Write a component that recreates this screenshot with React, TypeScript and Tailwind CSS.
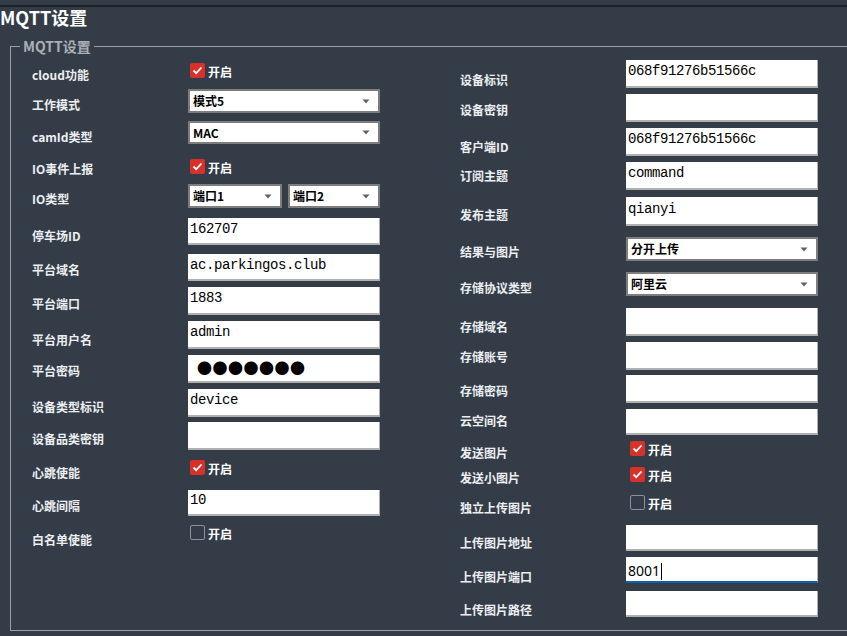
import React from 'react';

type Row =
    | { kind: 'input'; label: string; value?: string; mono?: boolean; password?: boolean; focus?: boolean; row: string; lab: string }
    | { kind: 'select'; label: string; value: string; row: string; lab: string }
    | { kind: 'select2'; label: string; a: string; b: string; row: string; lab: string }
    | { kind: 'check'; label: string; checked: boolean; row: string; lab: string };

const leftRows: Row[] = [
    { kind: 'check', label: 'cloud功能', checked: true, row: 'mt-[16px] h-[15px]', lab: 'mt-[4px]' },
    { kind: 'select', label: '工作模式', value: '模式5', row: 'mt-[11px] h-[24px]', lab: 'mt-[8px]' },
    { kind: 'select', label: 'camId类型', value: 'MAC', row: 'mt-[8px] h-[23px]', lab: 'mt-[8px]' },
    { kind: 'check', label: 'IO事件上报', checked: true, row: 'mt-[15px] h-[15px]', lab: 'mt-[2px]' },
    { kind: 'select2', label: 'IO类型', a: '端口1', b: '端口2', row: 'mt-[10px] h-[24px]', lab: 'mt-[7px]' },
    { kind: 'input', label: '停车场ID', value: '162707', mono: true, row: 'mt-[10px] h-[27px]', lab: 'mt-[10px]' },
    { kind: 'input', label: '平台域名', value: 'ac.parkingos.club', mono: true, row: 'mt-[9px] h-[27px]', lab: 'mt-[8px]' },
    { kind: 'input', label: '平台端口', value: '1883', mono: true, row: 'mt-[6px] h-[28px]', lab: 'mt-[9px]' },
    { kind: 'input', label: '平台用户名', value: 'admin', mono: true, row: 'mt-[6px] h-[28px]', lab: 'mt-[11px]' },
    { kind: 'input', label: '平台密码', value: '●●●●●●●', password: true, row: 'mt-[6px] h-[28px]', lab: 'mt-[8px]' },
    { kind: 'input', label: '设备类型标识', value: 'device', mono: true, row: 'mt-[6px] h-[28px]', lab: 'mt-[10px]' },
    { kind: 'input', label: '设备品类密钥', row: 'mt-[5px] h-[28px]', lab: 'mt-[9px]' },
    { kind: 'check', label: '心跳使能', checked: true, row: 'mt-[10px] h-[15px]', lab: 'mt-[5px]' },
    { kind: 'input', label: '心跳间隔', value: '10', mono: true, row: 'mt-[15px] h-[26px]', lab: 'mt-[8px]' },
    { kind: 'check', label: '白名单使能', checked: false, row: 'mt-[9px] h-[15px]', lab: 'mt-[7px]' },
];

const rightRows: Row[] = [
    { kind: 'input', label: '设备标识', value: '068f91276b51566c', mono: true, row: 'mt-[13px] h-[28px]', lab: 'mt-[12px]' },
    { kind: 'input', label: '设备密钥', row: 'mt-[6px] h-[28px]', lab: 'mt-[8px]' },
    { kind: 'input', label: '客户端ID', value: '068f91276b51566c', mono: true, row: 'mt-[6px] h-[28px]', lab: 'mt-[11px]' },
    { kind: 'input', label: '订阅主题', value: 'command', mono: true, row: 'mt-[6px] h-[28px]', lab: 'mt-[6px]' },
    { kind: 'input', label: '发布主题', value: 'qianyi', mono: true, row: 'mt-[7px] h-[29px]', lab: 'mt-[10px]' },
    { kind: 'select', label: '结果与图片', value: '分开上传', row: 'mt-[11px] h-[24px]', lab: 'mt-[7px]' },
    { kind: 'select', label: '存储协议类型', value: '阿里云', row: 'mt-[11px] h-[24px]', lab: 'mt-[8px]' },
    { kind: 'input', label: '存储域名', row: 'mt-[12px] h-[28px]', lab: 'mt-[11px]' },
    { kind: 'input', label: '存储账号', row: 'mt-[6px] h-[28px]', lab: 'mt-[7px]' },
    { kind: 'input', label: '存储密码', row: 'mt-[5px] h-[28px]', lab: 'mt-[8px]' },
    { kind: 'input', label: '云空间名', row: 'mt-[6px] h-[26px]', lab: 'mt-[4px]' },
    { kind: 'check', label: '发送图片', checked: true, row: 'mt-[6px] h-[15px]', lab: 'mt-[4px]' },
    { kind: 'check', label: '发送小图片', checked: true, row: 'mt-[11px] h-[15px]', lab: 'mt-[3px]' },
    { kind: 'check', label: '独立上传图片', checked: false, row: 'mt-[13px] h-[15px]', lab: 'mt-[5px]' },
    { kind: 'input', label: '上传图片地址', row: 'mt-[15px] h-[26px]', lab: 'mt-[10px]' },
    { kind: 'input', label: '上传图片端口', value: '8001', focus: true, row: 'mt-[6px] h-[26px]', lab: 'mt-[12px]' },
    { kind: 'input', label: '上传图片路径', row: 'mt-[8px] h-[26px]', lab: 'mt-[11px]' },
];

const Arrow = () => (
    <svg width="8" height="5" viewBox="0 0 8 5" className="shrink-0">
        <path d="M0.5 0.5 H7.5 L4 4.5 Z" fill="#5f6368" />
    </svg>
);

const Select = ({ value, width }: { value: string; width: string }) => (
    <div className={`${width} h-full bg-white border-2 border-[#7d7d7d] flex items-center justify-between pl-[3px] pr-[8px]`}>
        <span className="text-[12px] font-bold text-black leading-none">{value}</span>
        <Arrow />
    </div>
);

const Check = ({ checked, offset }: { checked: boolean; offset: string }) => (
    <div className={`flex items-center gap-[3px] h-full ${offset}`}>
        {checked ? (
            <div className="w-[15px] h-[15px] rounded-[2px] bg-[#d8312a] flex items-center justify-center">
                <svg width="11" height="9" viewBox="0 0 11 9">
                    <path d="M1.5 4.5 L4.2 7.2 L9.5 1.5" fill="none" stroke="#ffffff" strokeWidth="1.8" />
                </svg>
            </div>
        ) : (
            <div className="w-[15px] h-[15px] rounded-[2px] border border-[#8d9298]" />
        )}
        <span className="text-[12px] font-semibold text-white leading-none mt-[3px]">开启</span>
    </div>
);

const Field = ({ r, cbOffset, labelW }: { r: Row; cbOffset: string; labelW: string }) => {
    let control: React.ReactNode = null;
    if (r.kind === 'select') control = <Select value={r.value} width="w-[192px]" />;
    if (r.kind === 'select2')
        control = (
            <div className="flex gap-[6px] h-full">
                <Select value={r.a} width="w-[94px]" />
                <Select value={r.b} width="w-[92px]" />
            </div>
        );
    if (r.kind === 'check') control = <Check checked={r.checked} offset={cbOffset} />;
    if (r.kind === 'input') {
        const border = r.focus
            ? 'border-b-2 border-r border-b-[#0a5fb4] border-r-[#b4b4b4]'
            : 'border-b-2 border-r border-[#b0b0b0]';
        let text: React.ReactNode = null;
        if (r.password)
            text = <span className="text-[15px] tracking-[0.5px] text-black leading-none pl-[7px] -mt-[2px]">{r.value}</span>;
        else if (r.focus)
            text = (
                <span className="text-[14px] text-black leading-none font-['Noto_Sans','Liberation_Sans',sans-serif] flex items-center mt-[4px]">
                    {r.value}
                    <span className="inline-block w-px h-[17px] bg-black ml-[1px]" />
                </span>
            );
        else if (r.value)
            text = (
                <span className="text-[14px] tracking-[-0.4px] text-black leading-none font-['Liberation_Mono','DejaVu_Sans_Mono',monospace] -mt-[4px]">
                    {r.value}
                </span>
            );
        control = <div className={`w-[192px] h-full bg-white ${border} flex items-center pl-[2px]`}>{text}</div>;
    }
    return (
        <div className={`flex items-start ${r.row}`}>
            <div className={`${labelW} shrink-0 text-[12px] leading-4 font-bold text-[#eceff2] ${r.lab}`}>{r.label}</div>
            <div className="h-full">{control}</div>
        </div>
    );
};

export default function App() {
    return (
        <div className="w-[847px] h-[636px] overflow-hidden bg-[#343c47] font-['Noto_Sans_CJK_SC','Noto_Sans',sans-serif]">
            <div className="h-[5px]" />
            <div className="h-[2px] bg-[#1d2127]" />
            <div className="h-[39px] flex items-start">
                <h1 className="text-[18px] font-bold text-white leading-5 mt-[0px]">MQTT设置</h1>
            </div>
            <div className="relative ml-[10px] w-[850px] h-[585px] border border-[#9aa0a6]">
                <span className="absolute left-[9px] -top-[10px] px-[3px] bg-[#343c47] text-[14px] leading-[18px] font-bold text-[#a9b0b7]">
                    MQTT设置
                </span>
                <div className="flex">
                    <div className="w-[428px] pl-[21px] flex flex-col">
                        {leftRows.map((r) => (
                            <Field key={r.label} r={r} cbOffset="ml-[2px]" labelW="w-[156px]" />
                        ))}
                    </div>
                    <div className="pl-[21px] flex flex-col">
                        {rightRows.map((r) => (
                            <Field key={r.label} r={r} cbOffset="ml-[4px]" labelW="w-[166px]" />
                        ))}
                    </div>
                </div>
            </div>
        </div>
    );
}
